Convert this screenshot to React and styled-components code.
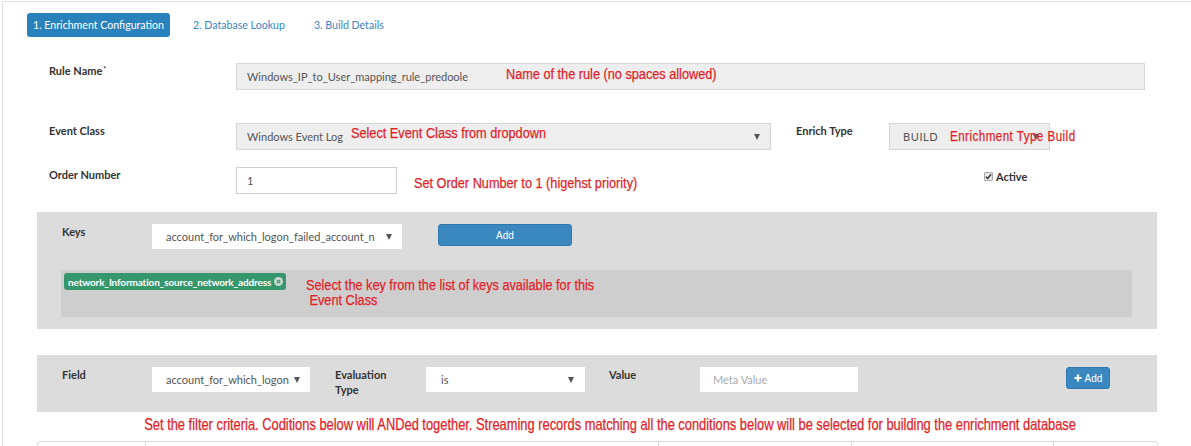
import React from "react";
import styled, { createGlobalStyle } from "styled-components";

const Global = createGlobalStyle`
  html, body { margin: 0; padding: 0; background: #fff; }
  body { font-family: Lato, "Open Sans", sans-serif; color: #333; overflow: hidden; }
  * { box-sizing: border-box; }
`;

const Page = styled.div`
  margin: 1px 0 0 2px;
  border-top: 1px solid #e2e2e2;
  border-left: 1px solid #e2e2e2;
  min-height: 100vh;
  width: 1300px;
`;

const Tabs = styled.div`
  display: flex;
  align-items: center;
  gap: 17px;
  padding: 11px 0 0 24px;
`;

const Tab = styled.div`
  height: 24px;
  line-height: 24px;
  padding: 0 6px;
  font-size: 10.6px;
  border-radius: 3px;
  color: ${(p) => (p.$active ? "#fff" : "#3a86c0")};
  background: ${(p) => (p.$active ? "#2a82bd" : "transparent")};
`;

const Form = styled.div`
  margin-top: 26px;
`;

const Row = styled.div`
  display: flex;
  align-items: flex-start;
  padding-left: 46px;
  margin-top: ${(p) => p.$mt || 0}px;
`;

const Label = styled.div`
  width: ${(p) => p.$w || 187}px;
  flex: none;
  font-size: 11px;
  font-weight: 700;
  line-height: 14px;
  padding-top: 1px;
  margin-left: ${(p) => p.$ml || 0}px;
  color: #333;
  sup { font-size: 7px; vertical-align: top; position: relative; top: -2px; margin-left: 1px; }
`;

const Field = styled.div`
  position: relative;
  flex: none;
  width: ${(p) => p.$w}px;
  height: ${(p) => p.$h || 27}px;
  display: flex;
  align-items: center;
  padding: 0 ${(p) => p.$px || 10}px;
  font-size: 11px;
  color: ${(p) => (p.$placeholder ? "#aaa" : "#555")};
  background: ${(p) => (p.$white ? "#fff" : "#eeeeee")};
  border: 1px solid ${(p) => (p.$borderless ? "#fff" : p.$white ? "#cfcfcf" : "#d6d6d6")};
  white-space: nowrap;
  letter-spacing: ${(p) => (p.$caps ? "0.6px" : "0")};
`;

const Clip = styled.span`
  flex: 1;
  overflow: hidden;
  white-space: nowrap;
`;

const Arrow = styled.span`
  flex: none;
  width: 0;
  height: 0;
  border-left: 3px solid transparent;
  border-right: 3px solid transparent;
  border-top: 6px solid #555;
  margin-left: auto;
  margin-right: ${(p) => p.$mr || 0}px;
`;

const Note = styled.span`
  display: inline-block;
  font-family: "Liberation Sans", Arial, sans-serif;
  font-size: ${(p) => p.$size || 15.5}px;
  line-height: 15px;
  color: #e31e28;
  white-space: nowrap;
  -webkit-text-stroke: 0.25px #e31e28;
  transform: scaleX(${(p) => p.$sx || 0.82});
  transform-origin: left center;
`;

const Overlay = styled.div`
  position: absolute;
  left: ${(p) => p.$x}px;
  top: ${(p) => p.$y}px;
  pointer-events: none;
`;

const NoteSlot = styled.div`
  flex: none;
  width: ${(p) => p.$w}px;
  padding: ${(p) => p.$pt || 0}px 0 0 ${(p) => p.$pl || 0}px;
`;

const ActiveBox = styled.label`
  display: flex;
  align-items: center;
  gap: 3px;
  padding-left: 95px;
  padding-top: 3px;
  font-size: 11px;
  font-weight: 700;
  color: #333;
`;

const Check = styled.span`
  width: 9px;
  height: 9px;
  border: 1px solid #a9a9a9;
  background: #e9e9e9;
  border-radius: 1px;
  display: flex;
  align-items: center;
  justify-content: center;
`;

const Panel = styled.div`
  margin: ${(p) => p.$mt || 0}px 0 0 34px;
  width: 1120px;
  height: ${(p) => (p.$h ? `${p.$h}px` : "auto")};
  background: #dcdcdc;
  padding: ${(p) => p.$pad};
`;

const PanelRow = styled.div`
  display: flex;
  align-items: flex-start;
`;

const PanelLabel = styled.div`
  flex: none;
  width: ${(p) => p.$w}px;
  font-size: 11px;
  font-weight: 700;
  line-height: 15px;
  padding-left: ${(p) => p.$pl || 0}px;
  color: #333;
`;

const Gap = styled.div`
  flex: none;
  width: ${(p) => p.$w}px;
`;

const Button = styled.button`
  flex: none;
  width: ${(p) => p.$w}px;
  height: 22px;
  margin-left: ${(p) => (p.$auto ? "auto" : `${p.$ml || 0}px`)};
  background: #3b87bf;
  border: 1px solid #3079b0;
  border-radius: 3px;
  color: #fff;
  font-family: "Liberation Sans", Arial, sans-serif;
  font-size: 10px;
  display: flex;
  align-items: center;
  justify-content: center;
  gap: 3px;
  padding: 0;
`;

const Strip = styled.div`
  margin-top: 21px;
  height: 47px;
  background: #cecece;
  padding: 3px;
  display: flex;
  align-items: flex-start;
`;

const Chip = styled.span`
  flex: none;
  height: 17px;
  display: inline-flex;
  align-items: center;
  gap: 3px;
  padding: 0 3px 0 4px;
  background: #36966c;
  border-radius: 3px;
  color: #fff;
  font-size: 10px;
  font-weight: 700;
  letter-spacing: -0.15px;
`;

const ChipX = styled.span`
  width: 9px;
  height: 9px;
  border-radius: 50%;
  background: #c9d9d1;
  display: flex;
  align-items: center;
  justify-content: center;
`;

const Caption = styled.div`
  margin-top: 5px;
  padding-left: 24px;
  display: flex;
  justify-content: center;
  width: 1190px;
  height: 16px;
`;

const CenterNote = styled(Note)`
  font-size: 15.7px;
  transform-origin: center center;
`;

const Table = styled.div`
  margin: 8px 0 0 34px;
  width: 1121px;
  display: grid;
  grid-template-columns: 107px 513px 193px 202px 1fr;
  border: 1px solid #dadada;
  border-radius: 3px 3px 0 0;
  height: 30px;
`;

const Cell = styled.div`
  border-left: ${(p) => (p.$first ? "none" : "1px solid #dadada")};
`;

const CheckIcon = () => (
  <svg width="7" height="7" viewBox="0 0 8 8">
    <path d="M1 4.2 L3.1 6.3 L7 1.4" stroke="#333" strokeWidth="1.6" fill="none" />
  </svg>
);

const XIcon = () => (
  <svg width="5" height="5" viewBox="0 0 6 6">
    <path d="M1 1 L5 5 M5 1 L1 5" stroke="#36966c" strokeWidth="1.4" />
  </svg>
);

const PlusIcon = () => (
  <svg width="8" height="8" viewBox="0 0 8 8">
    <path d="M4 0.5 V7.5 M0.5 4 H7.5" stroke="#fff" strokeWidth="2.2" />
  </svg>
);

export default function App() {
  return (
    <>
      <Global />
      <Page>
        <Tabs>
          <Tab $active>1. Enrichment Configuration</Tab>
          <Tab>2. Database Lookup</Tab>
          <Tab>3. Build Details</Tab>
        </Tabs>

        <Form>
          <Row>
            <Label>
              Rule Name<sup>*</sup>
            </Label>
            <Field $w={909}>
              Windows_IP_to_User_mapping_rule_predoole
              <Overlay $x={269} $y={2}>
                <Note>Name of the rule (no spaces allowed)</Note>
              </Overlay>
            </Field>
          </Row>

          <Row $mt={33}>
            <Label>Event Class</Label>
            <Field $w={535}>
              <Clip>Windows Event Log</Clip>
              <Arrow />
              <Overlay $x={114} $y={1}>
                <Note>Select Event Class from dropdown</Note>
              </Overlay>
            </Field>
            <Label $w={93} $ml={25}>
              Enrich Type
            </Label>
            <Field $w={161} $px={13} $caps>
              <Clip>BUILD</Clip>
              <Arrow $mr={-3} />
              <Overlay $x={60} $y={4}>
                <Note $sx={0.75}>Enrichment Type Build</Note>
              </Overlay>
            </Field>
          </Row>

          <Row $mt={17}>
            <Label>Order Number</Label>
            <Field $w={161} $white>
              1
            </Field>
            <NoteSlot $w={492} $pl={17} $pt={5}>
              <Note>Set Order Number to 1 (higehst priority)</Note>
            </NoteSlot>
            <ActiveBox>
              <Check>
                <CheckIcon />
              </Check>
              Active
            </ActiveBox>
          </Row>
        </Form>

        <Panel $mt={18} $pad="12px 25px 12px 24px">
          <PanelRow>
            <PanelLabel $w={91} $pl={1}>
              Keys
            </PanelLabel>
            <Field $w={250} $h={25} $white $borderless $px={13}>
              <Clip>account_for_which_logon_failed_account_n</Clip>
              <Arrow $mr={-4} />
            </Field>
            <Button $w={134} $ml={36}>
              Add
            </Button>
          </PanelRow>
          <Strip>
            <Chip>
              network_Information_source_network_address
              <ChipX>
                <XIcon />
              </ChipX>
            </Chip>
            <NoteSlot $w={420} $pl={20} $pt={4}>
              <Note>
                Select the key from the list of keys available for this
                <br />
                &nbsp;Event Class
              </Note>
            </NoteSlot>
          </Strip>
        </Panel>

        <Panel $mt={26} $h={57} $pad="12px 47px 0 25px">
          <PanelRow>
            <PanelLabel $w={90}>Field</PanelLabel>
            <Field $w={158} $h={25} $white $borderless $px={13}>
              <Clip>account_for_which_logon</Clip>
              <Arrow $mr={-4} />
            </Field>
            <Gap $w={25} />
            <PanelLabel $w={91}>
              Evaluation
              <br />
              Type
            </PanelLabel>
            <Field $w={159} $h={25} $white $borderless $px={14}>
              <Clip>is</Clip>
              <Arrow $mr={-4} />
            </Field>
            <Gap $w={24} />
            <PanelLabel $w={91}>Value</PanelLabel>
            <Field $w={158} $h={25} $white $borderless $px={12} $placeholder>
              Meta Value
            </Field>
            <Button $w={44} $auto>
              <PlusIcon />
              Add
            </Button>
          </PanelRow>
        </Panel>

        <Caption>
          <CenterNote>
            Set the filter criteria. Coditions below will ANDed together. Streaming records matching all the conditions below will be selected for building the enrichment database
          </CenterNote>
        </Caption>

        <Table>
          <Cell $first />
          <Cell />
          <Cell />
          <Cell />
          <Cell />
        </Table>
      </Page>
    </>
  );
}
